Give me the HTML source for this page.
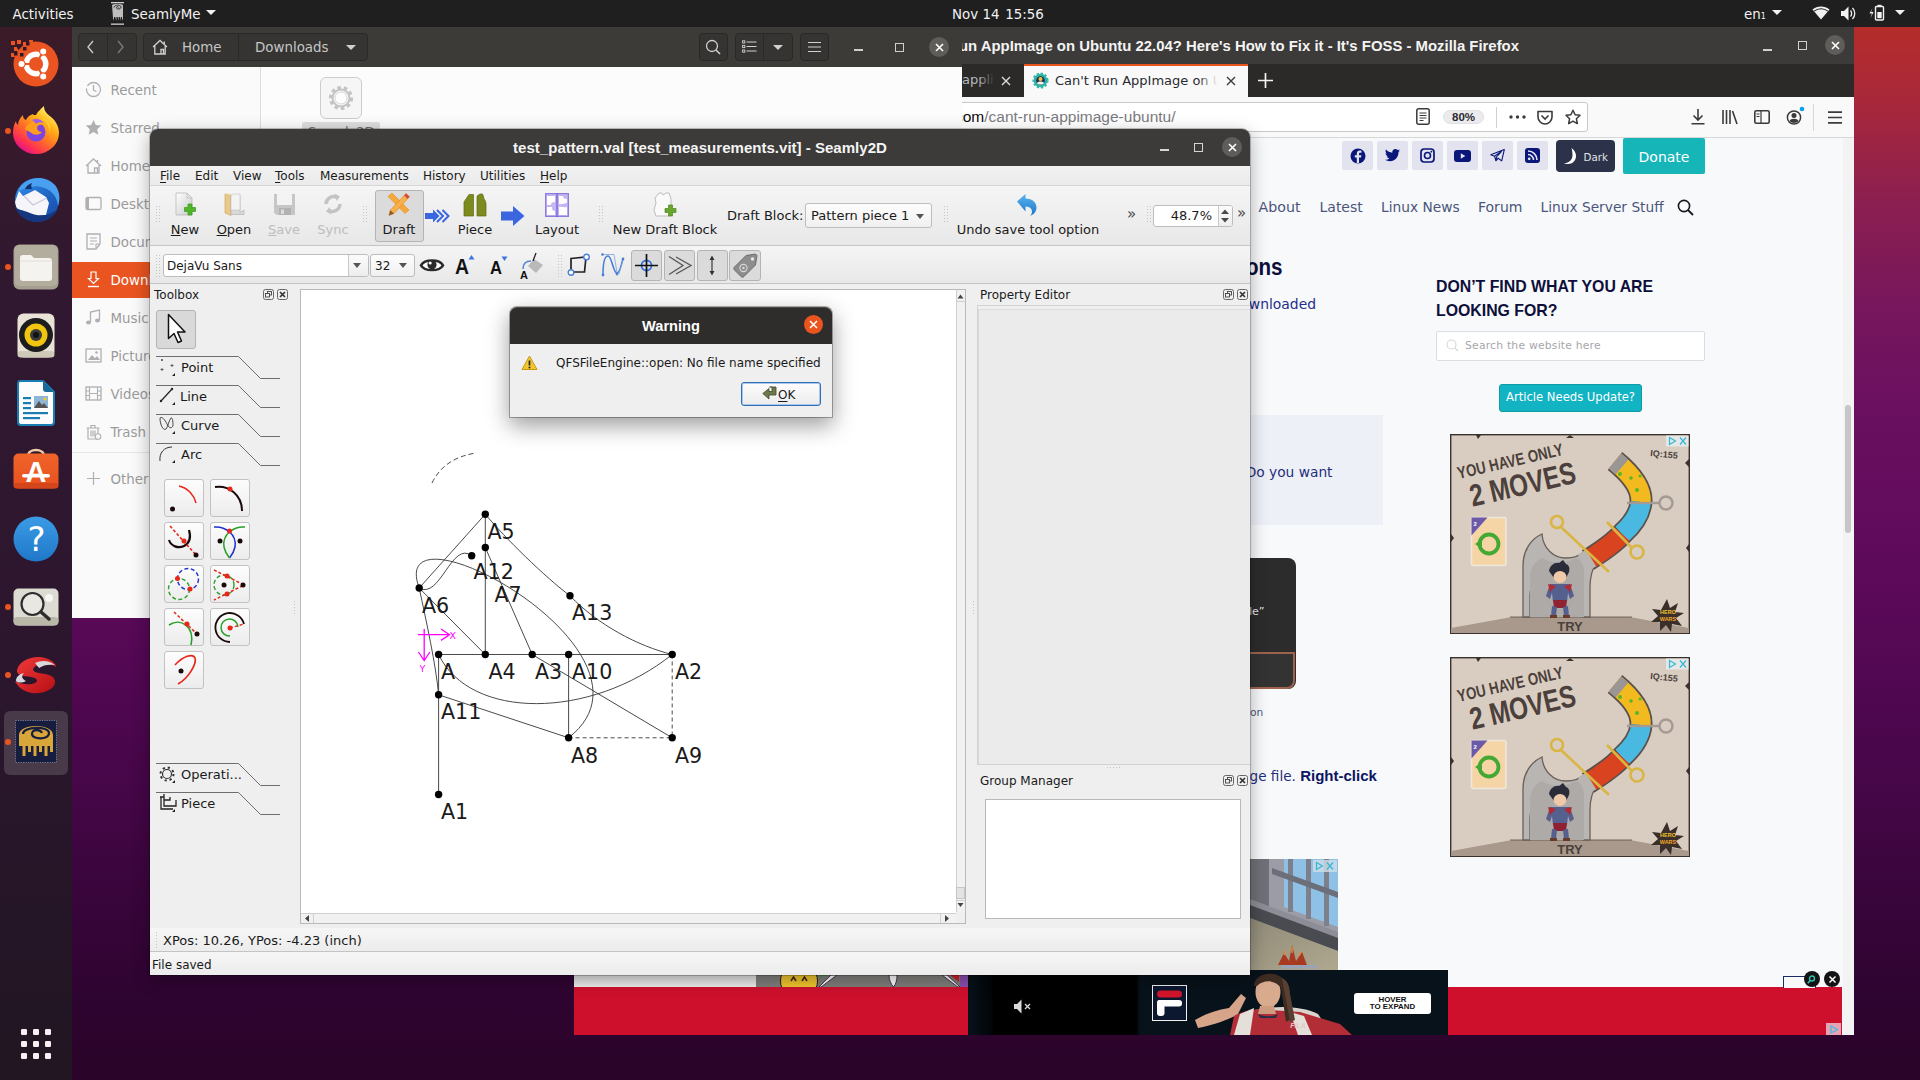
<!DOCTYPE html>
<html lang="en">
<head>
<meta charset="utf-8">
<title>Desktop</title>
<style>
*{box-sizing:border-box;margin:0;padding:0}
html,body{width:1920px;height:1080px;overflow:hidden;background:#2c0528}
body{position:relative;font-family:"DejaVu Sans","Liberation Sans",sans-serif;font-size:13px;color:#222}
.abs{position:absolute}
.ub{font-family:"Liberation Sans","DejaVu Sans",sans-serif}
#desk{left:0;top:0;width:1920px;height:1080px;background:linear-gradient(180deg,#b52d2b 27px,#a8283a 100px,#8c1f50 200px,#78175c 300px,#6b1060 400px,#640c5e 500px,#5a0958 600px,#4f0750 700px,#440646 800px,#38053a 900px,#2e0430 1000px,#2a0428 1080px)}
/* top bar */
#topbar{left:0;top:0;width:1920px;height:27px;background:#1f1f1f;color:#f2f2f2;font-size:14.5px}
#topbar span{position:absolute;top:4px;white-space:nowrap}
/* dock */
#dock{left:0;top:27px;width:72px;height:1053px;background:linear-gradient(180deg,#3b1b28 0%,#301830 25%,#2c162e 60%,#251627 85%,#221622 100%)}
.dot{position:absolute;left:5px;width:6px;height:6px;border-radius:3px;background:#e95420}
/* windows */
#files{left:72px;top:27px;width:890px;height:591px;background:#fcfcfc}
#files .hdr{left:0;top:0;width:890px;height:40px;background:#3c3b38}

#seam{left:150px;top:129px;width:1100px;height:846px;background:#efefef;border-radius:8px 8px 0 0;box-shadow:0 5px 18px rgba(0,0,0,.32),0 0 0 1px rgba(0,0,0,.22)}

/* seamly */
#seamc{left:0;top:0;width:1920px;height:1080px;font-size:12px;color:#1a1a1a}
#seamc div, #seamc span{position:absolute;white-space:nowrap}
.stitle{left:150px;top:129px;width:1100px;height:37px;background:#3c3b39;border-radius:8px 8px 0 0}
.stitle .t{left:0;width:1100px;top:10px;text-align:center;color:#f4f4f4;font-weight:bold;font-size:15.05px}
.menubar{left:150px;top:166px;width:1100px;height:19px;background:linear-gradient(#f1f1f1,#ebebeb)}
.menubar span{top:3px;font-size:12px}
.menubar u{text-decoration:underline;text-underline-offset:2px}
.tb1{left:150px;top:185px;width:1100px;height:61px;background:linear-gradient(#f5f5f5,#e8e8e8);border-top:1px solid #d6d6d6;border-bottom:1px solid #c4c4c4}
.tb2{left:150px;top:246px;width:1100px;height:38px;background:linear-gradient(#f5f5f5,#e8e8e8);border-bottom:1px solid #c4c4c4}
.tl{font-size:13px;top:222px;text-align:center}
.tl.dis{color:#bdbdbd}
.grip{width:5px;background-image:radial-gradient(circle,#c4c4c4 0.7px,transparent 0.9px);background-size:3px 3px}

.btnp{background:#dbdbdb;border:1px solid #b4b4b4;border-radius:3px}
.combo{background:linear-gradient(#fdfdfd,#f0f0f0);border:1px solid #bdbdbd;border-radius:3px}
.field{background:#fff;border:1px solid #bdbdbd;border-radius:3px}
#seamc svg{position:absolute;overflow:visible}
.da{width:0;height:0;border-left:4px solid transparent;border-right:4px solid transparent;border-top:5px solid #555}

.dockt{font-size:12px}
.dbtn{width:11px;height:11px;border:1px solid #555;border-radius:2px}
.toolb{width:40px;height:38px;background:linear-gradient(#fdfdfd,#ececec);border:1px solid #c2c2c2;border-radius:3px}
.tabl{font-size:13px}
.gl{font-size:20.6px;fill:#1a1a1a;font-family:"DejaVu Sans",sans-serif}

#topbar{font-family:"DejaVu Sans","Liberation Sans",sans-serif;font-size:13.4px}
#topbar svg,#dock svg{position:absolute;overflow:visible}
.wda{position:absolute;width:0;height:0;border-left:5px solid transparent;border-right:5px solid transparent;border-top:5.500px solid #f2f2f2}

#filesc{left:0;top:0;width:1920px;height:1080px;font-size:13.4px}
#filesc div,#filesc span,#filesc svg{position:absolute;white-space:nowrap}
#filesc svg{overflow:visible}
.hb{background:#353432;border:1px solid #2a2927;border-radius:4px}
.sbi{left:110.500px;color:#a0a0a0;margin-top:1px}

#ffx{left:574px;top:27px;width:1280px;height:1008px;background:#f8f9fb;overflow:hidden}
#ffxc{left:-574px;top:-27px;width:1920px;height:1080px;font-size:13.4px}
#ffxc div,#ffxc span,#ffxc svg{position:absolute;white-space:nowrap}
#ffxc svg{overflow:visible}
.soc{width:31px;height:29px;top:141px;background:#e2e3ef;border-radius:2px}
.nl{top:199px;font-size:14.200px;color:#4b557b}
</style>
</head>
<body>
<div id="desk" class="abs"></div>

<!-- FIREFOX WINDOW -->
<div id="ffx" class="abs">
<div id="ffxc" class="abs">
<div style="left:574px;top:27px;width:1280px;height:37px;background:#3c3b39"></div>
<div class="ub" style="left:574px;top:38px;width:945px;text-align:right;color:#f4f4f4;font-weight:bold;font-size:14.900px">Can't Run AppImage on Ubuntu 22.04? Here's How to Fix it - It's FOSS - Mozilla Firefox</div>
<div style="left:1763px;top:49px;width:9px;height:1.500px;background:#cfcfcf"></div>
<div style="left:1797.500px;top:41px;width:9px;height:9px;border:1.300px solid #cfcfcf"></div>
<div style="left:1825px;top:35px;width:20px;height:20px;border-radius:10px;background:#5e5d5a"></div>
<svg style="left:1830.500px;top:40.500px" width="9" height="9" viewBox="0 0 9 9"><path d="M1 1l7 7M8 1L1 8" stroke="#fff" stroke-width="1.600"/></svg>
<!-- tab bar -->
<div style="left:574px;top:64px;width:1280px;height:33px;background:#2b2a29"></div>
<div style="left:1024px;top:64px;width:224px;height:33px;background:#f9f9fa;border-top:2px solid #e8541e"></div>
<div style="left:762px;top:72px;width:200px;text-align:right;font-size:13px;color:#b9b9b9">ubuntu 22.04 cant run&nbsp;</div><div style="left:962px;top:72px;width:32px;overflow:hidden;font-size:13px;color:#b9b9b9">application - Google Search</div><div style="left:978px;top:68px;width:17px;height:26px;background:linear-gradient(90deg,rgba(43,42,41,0),#2b2a29)"></div>
<svg style="left:1001px;top:76px" width="10" height="10" viewBox="0 0 10 10"><path d="M1 1l8 8M9 1L1 9" stroke="#dcdcdc" stroke-width="1.400"/></svg>
<svg style="left:1032px;top:72px" width="17" height="17" viewBox="0 0 17 17"><circle cx="8.500" cy="8.500" r="6.800" fill="#2db5a6" stroke="#2db5a6" stroke-width="2.500" stroke-dasharray="2.200 1.800"/><circle cx="8.500" cy="8.500" r="4.300" fill="#23305e"/><circle cx="8.500" cy="7" r="2" fill="#f3c23a"/><path d="M5 11c1-2 6-2 7 0-1 2-6 2-7 0z" fill="#f7f2e2"/></svg>
<div style="left:1055px;top:73px;width:162px;height:18px;overflow:hidden;font-size:13px;color:#2a2a2e">Can't Run AppImage on Ubuntu</div>
<div style="left:1198px;top:68px;width:22px;height:26px;background:linear-gradient(90deg,rgba(249,249,250,0),#f9f9fa 90%)"></div>
<svg style="left:1226px;top:76px" width="10" height="10" viewBox="0 0 10 10"><path d="M1 1l8 8M9 1L1 9" stroke="#3d3d3f" stroke-width="1.400"/></svg>
<svg style="left:1258px;top:73px" width="15" height="15" viewBox="0 0 15 15"><path d="M7.500 0v15M0 7.500h15" stroke="#f4f4f4" stroke-width="1.700"/></svg>
<!-- nav bar -->
<div style="left:574px;top:97px;width:1280px;height:41px;background:#f9f9fa;border-bottom:1px solid #d7d7db"></div>
<div style="left:700px;top:102px;width:888px;height:30px;background:#fff;border:1px solid #c9c9cd;border-radius:3px"></div>
<div class="ub" style="left:700px;width:475.500px;text-align:right;top:108px;font-size:15.500px;color:#7a7a7e"><span style="position:static;color:#8a8a8e">itsfoss.</span><span style="position:static;color:#0c0c0d">com</span>/cant-run-appimage-ubuntu/</div>
<svg style="left:1416px;top:108px" width="14" height="17" viewBox="0 0 14 17"><rect x=".8" y=".8" width="12.400" height="15.400" rx="2" fill="none" stroke="#3b3b3d" stroke-width="1.500"/><path d="M3.500 5h7M3.500 7.500h7M3.500 10h7M3.500 12.500h4" stroke="#3b3b3d" stroke-width="1"/></svg>
<div style="left:1443px;top:110px;width:41px;height:14px;border-radius:7px;background:#ebebee;border:1px solid #e0e0e4"></div>
<div class="ub" style="left:1443px;top:110px;width:41px;text-align:center;font-size:11.500px;font-weight:bold;color:#2a2a2e;line-height:14px">80%</div>
<div style="left:1496px;top:107px;width:1px;height:21px;background:#d0d0d4"></div>
<svg style="left:1509px;top:115px" width="17" height="4" viewBox="0 0 17 4"><circle cx="2" cy="2" r="1.700" fill="#3b3b3d"/><circle cx="8.500" cy="2" r="1.700" fill="#3b3b3d"/><circle cx="15" cy="2" r="1.700" fill="#3b3b3d"/></svg>
<svg style="left:1537px;top:110px" width="16" height="15" viewBox="0 0 16 15"><path d="M1 1.500h14v5.500c0 4-3.500 7-7 7s-7-3-7-7z" fill="none" stroke="#3b3b3d" stroke-width="1.600" stroke-linejoin="round"/><path d="M4.500 5.500L8 9l3.500-3.500" fill="none" stroke="#3b3b3d" stroke-width="1.600"/></svg>
<svg style="left:1565px;top:109px" width="16" height="16" viewBox="0 0 16 16"><path d="M8 1.200l2.100 4.500 4.900.6-3.600 3.400.9 4.900L8 12.200l-4.300 2.400.9-4.900L1 6.300l4.900-.6z" fill="none" stroke="#3b3b3d" stroke-width="1.500" stroke-linejoin="round"/></svg>
<svg style="left:1691px;top:109px" width="14" height="16" viewBox="0 0 14 16"><path d="M7 0v11M2.500 6.500L7 11l4.500-4.500M.5 14.800h13" fill="none" stroke="#3b3b3d" stroke-width="1.600"/></svg>
<svg style="left:1722px;top:110px" width="16" height="14" viewBox="0 0 16 14"><path d="M1 0v14M4.500 0v14M8 0v14M10.500 1l4.500 13" fill="none" stroke="#3b3b3d" stroke-width="1.600"/></svg>
<svg style="left:1754px;top:110px" width="16" height="14" viewBox="0 0 16 14"><rect x=".8" y=".8" width="14.400" height="12.400" rx="1.500" fill="none" stroke="#3b3b3d" stroke-width="1.600"/><path d="M7 1v12M2.500 4h3M2.500 6.500h3" stroke="#3b3b3d" stroke-width="1.200"/></svg>
<svg style="left:1786px;top:106px" width="20" height="20" viewBox="0 0 20 20"><circle cx="8" cy="11.500" r="6.600" fill="none" stroke="#3b3b3d" stroke-width="1.500"/><circle cx="8" cy="9.500" r="2.500" fill="#3b3b3d"/><path d="M3.500 15c1-3 8-3 9 0-2 2.500-7 2.500-9 0z" fill="#3b3b3d"/><circle cx="16" cy="3" r="2.300" fill="#0a9fe8"/></svg>
<div style="left:1813px;top:104px;width:1px;height:27px;background:#d7d7db"></div>
<svg style="left:1828px;top:111px" width="14" height="13" viewBox="0 0 14 13"><path d="M0 1.200h14M0 6.500h14M0 11.800h14" stroke="#3b3b3d" stroke-width="1.700"/></svg>
<!-- page -->
<div class="soc" style="left:1342px"></div><div class="soc" style="left:1377px"></div><div class="soc" style="left:1412px"></div><div class="soc" style="left:1447px"></div><div class="soc" style="left:1482px"></div><div class="soc" style="left:1517px"></div>
<svg style="left:1350px;top:148px" width="16" height="16" viewBox="0 0 16 16"><circle cx="8" cy="8" r="7.500" fill="#0a1678"/><path d="M9 15V9.500h2l.4-2.300H9V6c0-.8.400-1.300 1.300-1.300h1.200V2.700c-.5-.1-1.100-.2-1.800-.2C8 2.500 6.800 3.600 6.800 5.600v1.600h-2v2.300h2V15z" fill="#e2e3ef"/></svg>
<svg style="left:1385px;top:149px" width="15" height="13" viewBox="0 0 15 13"><path d="M15 1.500c-.6.300-1.200.4-1.800.5.600-.4 1.100-1 1.400-1.700-.6.400-1.300.6-2 .8C12 .4 11.200 0 10.300 0 8.600 0 7.300 1.400 7.300 3c0 .3 0 .5.100.7C4.800 3.600 2.500 2.400 1 .6c-.3.500-.4 1-.4 1.600 0 1 .500 2 1.400 2.500-.5 0-1-.1-1.400-.4 0 1.500 1.100 2.700 2.500 3-.5.100-.9.100-1.400 0 .4 1.200 1.500 2.100 2.900 2.100C3.500 10.300 2.100 10.800.700 10.800H0C1.400 11.700 3 12.200 4.700 12.200c5.700 0 8.800-4.700 8.800-8.800v-.4c.6-.4 1.100-.9 1.500-1.500z" fill="#0a1678"/></svg>
<svg style="left:1420px;top:148px" width="15" height="15" viewBox="0 0 15 15"><rect x="1" y="1" width="13" height="13" rx="3.200" fill="none" stroke="#0a1678" stroke-width="1.700"/><circle cx="7.500" cy="7.500" r="3" fill="none" stroke="#0a1678" stroke-width="1.600"/><circle cx="11.300" cy="3.700" r=".9" fill="#0a1678"/></svg>
<svg style="left:1454px;top:150px" width="17" height="12" viewBox="0 0 17 12"><rect width="17" height="12" rx="3" fill="#0a1678"/><path d="M6.800 3.300L11.300 6 6.800 8.700z" fill="#e2e3ef"/></svg>
<svg style="left:1490px;top:149px" width="15" height="13" viewBox="0 0 15 13"><path d="M14.300.6L.8 5.800l3.700 1.400 1.400 4.600 2.200-2.600 3.600 2.700zM4.500 7.200l7-4.700-5 5.500-.6 3.800" fill="none" stroke="#0a1678" stroke-width="1.100" stroke-linejoin="round"/></svg>
<svg style="left:1525px;top:148px" width="15" height="15" viewBox="0 0 15 15"><rect width="15" height="15" rx="3" fill="#0a1678"/><circle cx="4.200" cy="10.800" r="1.400" fill="#e2e3ef"/><path d="M3 6.500c3 0 5.500 2.500 5.500 5.500M3 3c5 0 9 4 9 9" fill="none" stroke="#e2e3ef" stroke-width="1.600"/></svg>
<div style="left:1556px;top:140px;width:59px;height:32px;border-radius:4px;background:#2b3249"></div>
<svg style="left:1564px;top:148px" width="15" height="16" viewBox="0 0 15 16"><path d="M7.500 0c3 2 4.500 5 4.500 8 0 4.500-3.500 8-8 8-1.500 0-3-.4-4-1 4 .5 8.500-2.500 8.500-8 0-2.500-.5-5-1-7z" fill="#fff"/></svg>
<div style="left:1583.500px;top:150.500px;font-size:10.300px;color:#e0e1e8">Dark</div>
<div style="left:1623px;top:138px;width:82px;height:36px;border-radius:2px;background:#15b5b8"></div>
<div style="left:1623px;top:148.500px;width:82px;text-align:center;font-size:14px;color:#fff">Donate</div>
<div class="nl" style="left:1258.500px">About</div><div class="nl" style="left:1319.500px;font-size:14px">Latest</div><div class="nl" style="left:1381px;font-size:13.750px">Linux News</div><div class="nl" style="left:1478px;font-size:14px">Forum</div><div class="nl" style="left:1540.500px;font-size:13.750px">Linux Server Stuff</div>
<svg style="left:1677px;top:199px" width="17" height="17" viewBox="0 0 17 17"><circle cx="7" cy="7" r="5.600" fill="none" stroke="#17171f" stroke-width="1.600"/><path d="M11 11l5 5" stroke="#17171f" stroke-width="1.800"/></svg>

<div style="left:1150px;width:132.500px;text-align:right;top:255.500px;font-weight:bold;font-size:20.600px;color:#0d0f3a;transform:scaleY(1.14);transform-origin:50% 78%" class="ub">Instructions</div>
<div style="left:1150px;width:166px;text-align:right;top:296px;font-size:13.900px;color:#1f2f8a">downloaded</div>
<div style="left:1150px;top:415px;width:233px;height:110px;background:#eef0f8"></div>
<div style="left:1150px;width:182.500px;text-align:right;top:463.500px;font-size:13.760px;color:#1f2f7a">Do you want</div>
<div style="left:1100px;top:558px;width:196px;height:131px;border-radius:8px;background:#2c2c2c"></div>
<div style="left:1100px;top:652px;width:195px;height:37px;border-radius:0 0 8px 8px;background:#333;border:2px solid #9f624d"></div>
<div style="left:1249px;top:604.500px;font-size:11px;color:#e6e6e6">le”</div>
<div style="left:1250px;top:706px;font-size:10.700px;color:#4b557b">on</div>
<div style="left:1249.500px;top:766.500px;font-size:13.600px;color:#1f2f7a">ge file. <span class="ub" style="position:static;font-weight:bold;font-size:15px;color:#0b1560">Right-click</span></div>
<!-- prison ad -->
<svg style="left:1150px;top:859px" width="188" height="112" viewBox="0 0 188 112"><defs><linearGradient id="flg" x1="0" y1="0" x2="1" y2="1"><stop offset="0" stop-color="#8f8a78"/><stop offset="1" stop-color="#b0a990"/></linearGradient></defs><rect width="188" height="112" fill="#707178"/><path d="M119 0h69v74L119 48z" fill="#9b9ca6"/><path d="M134 0h54v68l-54-20z" fill="#8fc1e7"/><g fill="#7d7f8b"><rect x="138" y="0" width="5" height="53"/><rect x="156" y="0" width="5" height="60"/><rect x="174" y="0" width="5" height="67"/></g><path d="M122 9l66 24v6L122 15z" fill="#6c6e79"/><path d="M100 40l88 33v8L100 48z" fill="#8c8d96"/><path d="M100 46l88 33v13L100 59z" fill="#4a4b51"/><path d="M100 59l88 33v20H100z" fill="url(#flg)"/><path d="M128 106l6-12 5 8 3-16 4 16 6-9 5 13z" fill="#a83a22"/><path d="M134 96l2-4M151 93l-2 4M142 88v6" stroke="#e8863a" stroke-width="1.500"/><rect x="131" y="106" width="36" height="3.500" fill="#9aa3b5"/><rect x="163" y="1" width="24" height="12" fill="#cfdde6" fill-opacity=".8"/><path d="M166.500 3.500l6 3.500-6 3.500z" fill="none" stroke="#35b7d6" stroke-width="1.200"/><path d="M177 3.500l6 7M183 3.500l-6 7" stroke="#35b7d6" stroke-width="1.200"/></svg>
<!-- sidebar -->
<div class="ub" style="left:1436px;top:275px;font-weight:bold;font-size:15.850px;color:#0d0f3a;line-height:23.800px;white-space:normal;width:260px">DON’T FIND WHAT YOU ARE<br>LOOKING FOR?</div>
<div style="left:1436px;top:331px;width:269px;height:30px;background:#fff;border:1px solid #dcdde2;border-radius:2px"></div>
<svg style="left:1446px;top:339px" width="13" height="13" viewBox="0 0 13 13"><circle cx="5.500" cy="5.500" r="4.500" fill="none" stroke="#d5d5d8" stroke-width="1.100"/><path d="M9 9l3 3" stroke="#d5d5d8" stroke-width="1.200"/></svg>
<div style="left:1465px;top:339px;font-size:10.800px;color:#a6a6ab;letter-spacing:.2px">Search the website here</div>
<div style="left:1499px;top:384px;width:143px;height:28px;border-radius:3px;background:#12b3c2;border:1px solid #0f9aa8"></div>
<div style="left:1499px;top:390px;width:143px;text-align:center;font-size:11.600px;color:#fff">Article Needs Update?</div>
<svg style="left:1450px;top:434px" width="240" height="200" viewBox="0 0 240 200">
<rect x=".7" y=".7" width="238.600" height="198.600" fill="#d9cdc1" stroke="#3b322e" stroke-width="1.400"/>
<path d="M1 194L62 183H180L239 194V199H1z" fill="#a8998c"/><path d="M60 183h122" stroke="#5b4f48" stroke-width=".8"/>
<path d="M73 183V132c0-16 8-27 19-32 1 14 11 24 24 24 8 0 14-2 19-7l12 10c-5 8-7 16-7 26v30h-7v-28c0-8-4-12-9-14-10 4-22 4-31-1-8 4-13 10-13 22v21z" fill="#b9b5b3" stroke="#6b605a" stroke-width="1.300"/>
<path d="M80 183v-40c0-9 5-16 12-19 9 6 24 6 34 0 5 2 8 7 8 15v44z" fill="#aeaaa8"/>
<g fill="none" stroke-linecap="butt"><path d="M165 27C181 40 192 54 191 68C190 80 182 91 172 100C165 108 154 116 138 126" stroke="#5b514b" stroke-width="23"/><path d="M165 27C181 40 192 54 191 68" stroke="#f2ba1f" stroke-width="19.500"/><path d="M165 27l7 6" stroke="#9a9695" stroke-width="19.500"/><path d="M191 68C190 80 182 91 172 100" stroke="#4ab9e2" stroke-width="19.500"/><path d="M172 100C165 108 154 116 140 125" stroke="#d9431f" stroke-width="19.500"/><path d="M141 124l-8 5" stroke="#b9b5b3" stroke-width="19.500"/></g>
<circle cx="170" cy="40" r="2" fill="#58b52a"/><circle cx="181" cy="44" r="1.800" fill="#58b52a"/><circle cx="187" cy="56" r="2" fill="#58b52a"/><circle cx="190" cy="42" r="1.500" fill="#58b52a"/>
<g fill="none" stroke="#d9b544" stroke-width="2.600"><circle cx="107" cy="88" r="6"/><circle cx="187" cy="118" r="6.500"/><path d="M111 93l48 45M182 114l-25-26"/></g>
<g fill="none" stroke="#a39a94" stroke-width="2.400"><circle cx="216" cy="69" r="6.500"/><path d="M209 69h-32"/></g>
<rect x="21.500" y="83.500" width="34.500" height="48" rx="2" fill="#f5d4a6" stroke="#efe7dd" stroke-width="1.600"/><path d="M21.500 83.500h16l-16 18z" fill="#6b5aa8"/><circle cx="39" cy="110" r="9.500" fill="none" stroke="#44a832" stroke-width="3.800"/><path d="M25 110l7-5v10z" fill="#44a832"/>
<text x="23.500" y="92" font-size="6" font-weight="bold" fill="#fff" font-family="Liberation Sans, sans-serif">2</text>
<g transform="translate(1 -9) rotate(-13 60 40)" fill="#4b403b" font-family="Liberation Sans, sans-serif" font-weight="bold"><text x="6" y="42" font-size="17" textLength="108" lengthAdjust="spacingAndGlyphs">YOU HAVE ONLY</text><text x="13" y="72" font-size="31" textLength="108" lengthAdjust="spacingAndGlyphs">2 MOVES</text></g>
<text x="200" y="22" font-size="9" font-weight="bold" fill="#4b403b" font-family="Liberation Sans, sans-serif" transform="rotate(6 200 22)">IQ:155</text>
<g><path d="M99 137c1-6 6-9 10-8l4-3 3 4c3 1 4 4 3 8l-3 6h-12z" fill="#2b2c3a"/><ellipse cx="110" cy="143" rx="6.500" ry="6" fill="#f0c9a8"/><path d="M100 150h20l4 12-4 3-2-6-1 9h-14l-1-9-2 6-4-3z" fill="#56608f"/><path d="M98 150l8 2-6 6zM122 150l-8 2 6 6z" fill="#b22a34"/><path d="M103 166h14l-1 8h-12z" fill="#8f2230"/><path d="M102 172l5 1-1 9h-5zM113 173l5-1 1 10h-5z" fill="#56608f"/><path d="M100 181h7v3h-7zM113 181h7v3h-7z" fill="#6b3b2a"/></g>
<text x="120" y="196.500" font-size="13" font-weight="bold" text-anchor="middle" fill="#4b403b" font-family="Liberation Sans, sans-serif">TRY</text>
<path d="M217 165l3 9 8-5-3 9 9 1-8 5 6 8-10-2-1 8-5-7-6 6 0-9-9 0 7-6-6-7 9 1z" fill="#3a2f2b"/><text x="218" y="180" font-size="5.500" font-weight="bold" text-anchor="middle" fill="#f2c32a" font-family="Liberation Sans, sans-serif">HERO</text><text x="218" y="186.500" font-size="5.500" font-weight="bold" text-anchor="middle" fill="#f2a82a" font-family="Liberation Sans, sans-serif">WARS</text>
<rect x="216" y="1.500" width="22.500" height="11" fill="#e9eef0" fill-opacity=".8"/><path d="M219.500 3.500l6 3.500-6 3.500z" fill="none" stroke="#35b7d6" stroke-width="1.200"/><path d="M230 3.500l6 7M236 3.500l-6 7" stroke="#35b7d6" stroke-width="1.200"/>
<path d="M1 100l3 4-3 4zM239 25l-4 4 4 4zM120 1l-4 3 8 0zM239 110l-3 4 3 4zM26 1l2 4 3-4z" fill="#3b322e"/>
</svg><svg style="left:1450px;top:657px" width="240" height="200" viewBox="0 0 240 200">
<rect x=".7" y=".7" width="238.600" height="198.600" fill="#d9cdc1" stroke="#3b322e" stroke-width="1.400"/>
<path d="M1 194L62 183H180L239 194V199H1z" fill="#a8998c"/><path d="M60 183h122" stroke="#5b4f48" stroke-width=".8"/>
<path d="M73 183V132c0-16 8-27 19-32 1 14 11 24 24 24 8 0 14-2 19-7l12 10c-5 8-7 16-7 26v30h-7v-28c0-8-4-12-9-14-10 4-22 4-31-1-8 4-13 10-13 22v21z" fill="#b9b5b3" stroke="#6b605a" stroke-width="1.300"/>
<path d="M80 183v-40c0-9 5-16 12-19 9 6 24 6 34 0 5 2 8 7 8 15v44z" fill="#aeaaa8"/>
<g fill="none" stroke-linecap="butt"><path d="M165 27C181 40 192 54 191 68C190 80 182 91 172 100C165 108 154 116 138 126" stroke="#5b514b" stroke-width="23"/><path d="M165 27C181 40 192 54 191 68" stroke="#f2ba1f" stroke-width="19.500"/><path d="M165 27l7 6" stroke="#9a9695" stroke-width="19.500"/><path d="M191 68C190 80 182 91 172 100" stroke="#4ab9e2" stroke-width="19.500"/><path d="M172 100C165 108 154 116 140 125" stroke="#d9431f" stroke-width="19.500"/><path d="M141 124l-8 5" stroke="#b9b5b3" stroke-width="19.500"/></g>
<circle cx="170" cy="40" r="2" fill="#58b52a"/><circle cx="181" cy="44" r="1.800" fill="#58b52a"/><circle cx="187" cy="56" r="2" fill="#58b52a"/><circle cx="190" cy="42" r="1.500" fill="#58b52a"/>
<g fill="none" stroke="#d9b544" stroke-width="2.600"><circle cx="107" cy="88" r="6"/><circle cx="187" cy="118" r="6.500"/><path d="M111 93l48 45M182 114l-25-26"/></g>
<g fill="none" stroke="#a39a94" stroke-width="2.400"><circle cx="216" cy="69" r="6.500"/><path d="M209 69h-32"/></g>
<rect x="21.500" y="83.500" width="34.500" height="48" rx="2" fill="#f5d4a6" stroke="#efe7dd" stroke-width="1.600"/><path d="M21.500 83.500h16l-16 18z" fill="#6b5aa8"/><circle cx="39" cy="110" r="9.500" fill="none" stroke="#44a832" stroke-width="3.800"/><path d="M25 110l7-5v10z" fill="#44a832"/>
<text x="23.500" y="92" font-size="6" font-weight="bold" fill="#fff" font-family="Liberation Sans, sans-serif">2</text>
<g transform="translate(1 -9) rotate(-13 60 40)" fill="#4b403b" font-family="Liberation Sans, sans-serif" font-weight="bold"><text x="6" y="42" font-size="17" textLength="108" lengthAdjust="spacingAndGlyphs">YOU HAVE ONLY</text><text x="13" y="72" font-size="31" textLength="108" lengthAdjust="spacingAndGlyphs">2 MOVES</text></g>
<text x="200" y="22" font-size="9" font-weight="bold" fill="#4b403b" font-family="Liberation Sans, sans-serif" transform="rotate(6 200 22)">IQ:155</text>
<g><path d="M99 137c1-6 6-9 10-8l4-3 3 4c3 1 4 4 3 8l-3 6h-12z" fill="#2b2c3a"/><ellipse cx="110" cy="143" rx="6.500" ry="6" fill="#f0c9a8"/><path d="M100 150h20l4 12-4 3-2-6-1 9h-14l-1-9-2 6-4-3z" fill="#56608f"/><path d="M98 150l8 2-6 6zM122 150l-8 2 6 6z" fill="#b22a34"/><path d="M103 166h14l-1 8h-12z" fill="#8f2230"/><path d="M102 172l5 1-1 9h-5zM113 173l5-1 1 10h-5z" fill="#56608f"/><path d="M100 181h7v3h-7zM113 181h7v3h-7z" fill="#6b3b2a"/></g>
<text x="120" y="196.500" font-size="13" font-weight="bold" text-anchor="middle" fill="#4b403b" font-family="Liberation Sans, sans-serif">TRY</text>
<path d="M217 165l3 9 8-5-3 9 9 1-8 5 6 8-10-2-1 8-5-7-6 6 0-9-9 0 7-6-6-7 9 1z" fill="#3a2f2b"/><text x="218" y="180" font-size="5.500" font-weight="bold" text-anchor="middle" fill="#f2c32a" font-family="Liberation Sans, sans-serif">HERO</text><text x="218" y="186.500" font-size="5.500" font-weight="bold" text-anchor="middle" fill="#f2a82a" font-family="Liberation Sans, sans-serif">WARS</text>
<rect x="216" y="1.500" width="22.500" height="11" fill="#e9eef0" fill-opacity=".8"/><path d="M219.500 3.500l6 3.500-6 3.500z" fill="none" stroke="#35b7d6" stroke-width="1.200"/><path d="M230 3.500l6 7M236 3.500l-6 7" stroke="#35b7d6" stroke-width="1.200"/>
<path d="M1 100l3 4-3 4zM239 25l-4 4 4 4zM120 1l-4 3 8 0zM239 110l-3 4 3 4zM26 1l2 4 3-4z" fill="#3b322e"/>
</svg>
<div style="left:1843px;top:138px;width:11px;height:897px;background:#f3f3f4"></div>
<div style="left:1845px;top:405px;width:6px;height:128px;border-radius:3px;background:#c6c6c8"></div>
<!-- bottom -->
<div style="left:574px;top:970px;width:182px;height:17px;background:linear-gradient(#dcdcdc,#f0f0f0)"></div>
<div style="left:756px;top:960px;width:204px;height:27px;background:#807f7c"></div>
<div style="left:960px;top:960px;width:8px;height:27px;background:#8a4fb0"></div>
<div style="left:780px;top:962px;width:38px;height:38px;border-radius:19px;background:#f1c72e;border:1.500px solid #2a1a2a"></div>
<svg style="left:790px;top:976px" width="20" height="6" viewBox="0 0 20 6"><path d="M1 5l2.500-4L6 5M12 5l2.500-4L17 5" fill="none" stroke="#4a2c10" stroke-width="1.600"/></svg>
<svg style="left:819px;top:975px" width="150" height="12" viewBox="0 0 150 12"><path d="M0 12L12 0h6L2 12z" fill="#fff" stroke="#2a1a3a" stroke-width=".8"/><path d="M0 3l6-3H1z" fill="#3f9a3a"/><path d="M70 0c0 5 2 9 4.500 12C77 9 78 5 78 0z" fill="#fff" stroke="#2a1a3a" stroke-width=".8"/><path d="M123 0l16 12h2L128 0z" fill="#fff" stroke="#2a1a3a" stroke-width=".8"/><path d="M131 0l9 7V0z" fill="#d0202a"/></svg>
<div style="left:574px;top:987px;width:1268px;height:48px;background:#cf102d"></div>
<div style="left:968px;top:970px;width:480px;height:65px;background:linear-gradient(90deg,#08121a 0,#02060a 22px,#000 26px,#000 168px,#08121a 172px,#08121a 100%)"></div>
<svg style="left:1014px;top:999px" width="18" height="15" viewBox="0 0 18 15"><path d="M0 5h3l4.500-4.500v14L3 10H0z" fill="#d8d8d8"/><path d="M11 5l5 5M16 5l-5 5" stroke="#d8d8d8" stroke-width="1.300"/></svg>
<div style="left:1152px;top:985px;width:35px;height:36px;border:1.500px solid #f2f2f2;background:#0b1830"></div>
<svg style="left:1156px;top:989px" width="27" height="28" viewBox="0 0 27 28"><rect x="1" y="1.500" width="25" height="7" rx="3.500" fill="#d2142c"/><rect x="1" y="11" width="25" height="6.500" rx="3" fill="#fff"/><rect x="1" y="11" width="7.500" height="16" rx="3" fill="#fff"/></svg>
<svg style="left:1190px;top:970px" width="165" height="65" viewBox="0 0 165 65"><path d="M58 42c20-6 50-8 70 2l14 21H50z" fill="#d9d3cd"/><path d="M5 50c10-6 22-10 34-12l12-14 5 4-8 16c-6 4-20 10-40 14z" fill="#d6a488"/><path d="M44 46c10-6 24-8 36-6l30 2 40 12 12 11H40z" fill="#b32d36"/><path d="M100 42l14 4 8 19H108z" fill="#e4dfd9"/><path d="M50 44l14-6-4 27H44z" fill="#e4dfd9"/><ellipse cx="78" cy="22" rx="12.500" ry="16" fill="#d8ab8f"/><path d="M64 16C64 1 92-1 96 14l7 34-7 4-5-34c-5-8-17-9-24-2z" fill="#3e2b22"/><path d="M92 8c5 2 8 8 8 16l5 26-5 2z" fill="#5a4032"/><path d="M70 36h14l2 8H68z" fill="#cf9b7e"/><path d="M68 44c6 3 14 3 20 0l-2 4H70z" fill="#2a2d4a"/><text x="108" y="58" font-size="7" font-weight="bold" fill="#e2c9c9" text-anchor="middle" font-family="Liberation Sans, sans-serif" font-style="italic">FILA</text></svg>
<div style="left:1354px;top:993px;width:77px;height:21px;border-radius:3px;background:#fff"></div>
<div class="ub" style="left:1354px;top:995.500px;width:77px;text-align:center;font-size:7.900px;font-weight:bold;color:#111;line-height:7.800px;white-space:normal">HOVER<br>TO EXPAND</div>
<div style="left:1783px;top:976px;width:33px;height:12px;border:1px solid #1a2a6a;border-bottom:none;background:#f8f9fb"></div>
<div style="left:1803.500px;top:971px;width:16px;height:16px;border-radius:8px;background:#141414"></div>
<svg style="left:1807px;top:974.500px" width="9" height="9" viewBox="0 0 9 9"><circle cx="5" cy="3.500" r="2.500" fill="none" stroke="#2fc3b0" stroke-width="1.400"/><path d="M3.200 5.500L.8 8.300" stroke="#2fc3b0" stroke-width="1.500"/></svg>
<div style="left:1824px;top:971px;width:16px;height:16px;border-radius:8px;background:#141414"></div>
<svg style="left:1828.500px;top:975.500px" width="7" height="7" viewBox="0 0 7 7"><path d="M.5.5l6 6M6.500.5l-6 6" stroke="#fff" stroke-width="1.500"/></svg>
<div style="left:1826px;top:1023px;width:15px;height:12px;background:#e6a3b6"></div>
<svg style="left:1830px;top:1024.500px" width="9" height="9" viewBox="0 0 9 9"><path d="M1 1l6.500 3.500L1 8z" fill="none" stroke="#4ab9e2" stroke-width="1.300"/></svg>

</div>

</div>

<!-- FILES WINDOW -->
<div id="files" class="abs">
<div class="hdr abs"></div>
</div>

<div id="filesc" class="abs">
<div style="left:72px;top:67px;width:189px;height:551px;background:#fafafa;border-right:1px solid #dcdcdc"></div>
<div style="left:72px;top:452px;width:188px;height:1px;background:#e6e6e6"></div>
<svg style="left:85px;top:81px" width="17" height="17" viewBox="0 0 17 17"><circle cx="8.500" cy="8.500" r="7" fill="none" stroke="#b0b0b0" stroke-width="1.300"/><path d="M8.500 4v5l3 1.500" fill="none" stroke="#b0b0b0" stroke-width="1.300"/><path d="M0 5l2.500 3.500L5 5z" fill="#fafafa"/></svg><div class="sbi" style="top:82px;color:#9b9b9b">Recent</div><svg style="left:85px;top:119px" width="17" height="17" viewBox="0 0 17 17"><path d="M8.500 1l2.300 5 5.400.6-4 3.700 1.100 5.400-4.800-2.700-4.800 2.700 1.100-5.400-4-3.700 5.400-.6z" fill="#b0b0b0"/></svg><div class="sbi" style="top:120px;color:#9b9b9b">Starred</div><svg style="left:85px;top:157px" width="17" height="17" viewBox="0 0 17 17"><path d="M1 9l7.500-7L16 9M3 8v8h11V8M9.500 16v-5h3v5M12.500 3v3" fill="none" stroke="#b0b0b0" stroke-width="1.300"/></svg><div class="sbi" style="top:158px;color:#9b9b9b">Home</div><svg style="left:85px;top:195px" width="17" height="17" viewBox="0 0 17 17"><rect x="1" y="2.500" width="15" height="12" rx="1.500" fill="none" stroke="#b0b0b0" stroke-width="1.300"/><rect x="1" y="2.500" width="3" height="12" fill="#b0b0b0"/></svg><div class="sbi" style="top:196px;color:#9b9b9b">Desktop</div><svg style="left:85px;top:233px" width="17" height="17" viewBox="0 0 17 17"><path d="M2 1h13v10l-4 5H2z" fill="none" stroke="#b0b0b0" stroke-width="1.300"/><path d="M5 5h7M5 8h7M5 11h4M15 11h-4v5" fill="none" stroke="#b0b0b0" stroke-width="1.100"/></svg><div class="sbi" style="top:234px;color:#9b9b9b">Documents</div><div style="left:72px;top:262px;width:189px;height:36px;background:#e95420"></div><svg style="left:85px;top:271px" width="17" height="17" viewBox="0 0 17 17"><path d="M3 15.500h11" fill="none" stroke="#fff" stroke-width="1.400"/><path d="M6 1h5v6.500h2.500l-5 5-5-5H6z" fill="none" stroke="#fff" stroke-width="1.200"/></svg><div class="sbi" style="top:272px;color:#fff">Downloads</div><svg style="left:85px;top:309px" width="17" height="17" viewBox="0 0 17 17"><path d="M5.500 13V3l9-2v10" fill="none" stroke="#b0b0b0" stroke-width="1.300"/><ellipse cx="3.500" cy="13.500" rx="2.500" ry="2" fill="#b0b0b0"/><ellipse cx="12.500" cy="11.500" rx="2.500" ry="2" fill="#b0b0b0"/></svg><div class="sbi" style="top:310px;color:#9b9b9b">Music</div><svg style="left:85px;top:347px" width="17" height="17" viewBox="0 0 17 17"><rect x="1" y="2" width="15" height="13" fill="none" stroke="#b0b0b0" stroke-width="1.300"/><path d="M3 13l4-5 3 3 2-2 3 4z" fill="#b0b0b0"/><circle cx="11.500" cy="5.500" r="1.300" fill="#b0b0b0"/></svg><div class="sbi" style="top:348px;color:#9b9b9b">Pictures</div><svg style="left:85px;top:385px" width="17" height="17" viewBox="0 0 17 17"><rect x="1" y="2" width="15" height="13" fill="none" stroke="#b0b0b0" stroke-width="1.300"/><path d="M4.500 2v13M12.500 2v13M1 6h3.500M1 10.500h3.500M12.500 6H16M12.500 10.500H16M4.500 8.500h8" stroke="#b0b0b0" stroke-width="1.100" fill="none"/></svg><div class="sbi" style="top:386px;color:#9b9b9b">Videos</div><svg style="left:85px;top:423px" width="17" height="17" viewBox="0 0 17 17"><path d="M3 5h10v11H3zM1.500 5h13M6 5V2.500h4V5M6 7.500v6M8 7.500v6M10 7.500v6" fill="none" stroke="#b0b0b0" stroke-width="1.200"/><circle cx="13" cy="13.500" r="2.800" fill="#fafafa" stroke="#b0b0b0" stroke-width="1.100"/></svg><div class="sbi" style="top:424px;color:#9b9b9b">Trash</div><svg style="left:85px;top:470px" width="17" height="17" viewBox="0 0 17 17"><path d="M8.500 2v13M2 8.500h13" stroke="#b0b0b0" stroke-width="1.200"/></svg><div class="sbi" style="top:471px;color:#9b9b9b">Other Locations</div>
<!-- header -->
<div class="hb" style="left:78px;top:33px;width:59px;height:28px"></div><div style="left:107px;top:34px;width:1px;height:26px;background:#2a2927"></div>
<svg style="left:86px;top:40px" width="44" height="14" viewBox="0 0 44 14"><path d="M7 1L2 7l5 6" fill="none" stroke="#c9c9c9" stroke-width="1.400"/><path d="M32 1l5 6-5 6" fill="none" stroke="#7a7977" stroke-width="1.400"/></svg>
<div class="hb" style="left:143px;top:33px;width:225px;height:28px"></div><div style="left:238px;top:34px;width:1px;height:26px;background:#2a2927"></div>
<svg style="left:152px;top:39px" width="16" height="16" viewBox="0 0 16 16"><path d="M1 8l7-6.500L15 8M2.800 7v8h10.400V7M9 15v-4.500h2.500V15M12.300 2.500v3" fill="none" stroke="#d0d0d0" stroke-width="1.300"/></svg>
<div style="left:182px;top:40px;color:#c6c6c6">Home</div>
<div style="left:255px;top:40px;color:#c6c6c6">Downloads</div>
<div class="wda" style="left:346px;top:45px;border-top-color:#cfcfcf"></div>
<div class="hb" style="left:699px;top:33px;width:29px;height:28px"></div>
<svg style="left:705px;top:39px" width="16" height="16" viewBox="0 0 16 16"><circle cx="7" cy="7" r="5.500" fill="none" stroke="#d0d0d0" stroke-width="1.300"/><path d="M11 11l4 4" stroke="#d0d0d0" stroke-width="1.600"/></svg>
<div class="hb" style="left:735px;top:33px;width:58px;height:28px"></div><div style="left:763px;top:34px;width:1px;height:26px;background:#2a2927"></div>
<svg style="left:742px;top:40px" width="15" height="13" viewBox="0 0 15 13"><path d="M4.500 2h10M4.500 6.500h10M4.500 11h10" stroke="#d0d0d0" stroke-width="1.200"/><rect x=".6" y=".8" width="2.200" height="2.200" fill="none" stroke="#d0d0d0" stroke-width=".9"/><rect x=".6" y="5.400" width="2.200" height="2.200" fill="none" stroke="#d0d0d0" stroke-width=".9"/><rect x=".6" y="10" width="2.200" height="2.200" fill="none" stroke="#d0d0d0" stroke-width=".9"/></svg>
<div class="wda" style="left:773px;top:45px;border-top-color:#cfcfcf"></div>
<div class="hb" style="left:800px;top:33px;width:29px;height:28px"></div>
<svg style="left:808px;top:41px" width="13" height="12" viewBox="0 0 13 12"><path d="M0 1.500h13M0 6h13M0 10.500h13" stroke="#d0d0d0" stroke-width="1.200"/></svg>
<div style="left:854px;top:49px;width:9px;height:1.500px;background:#cfcfcf"></div>
<div style="left:895px;top:43px;width:9px;height:9px;border:1.300px solid #cfcfcf"></div>
<div style="left:929px;top:37px;width:20px;height:20px;border-radius:10px;background:#5e5d5a"></div>
<svg style="left:934.500px;top:42.500px" width="9" height="9" viewBox="0 0 9 9"><path d="M1 1l7 7M8 1L1 8" stroke="#fff" stroke-width="1.600"/></svg>
<!-- file icon -->
<div style="left:320px;top:77px;width:42px;height:42px;border:1px solid #cdcdcd;border-radius:6px;background:#f6f6f6"></div>
<svg style="left:327px;top:84px" width="28" height="28" viewBox="0 0 28 28"><circle cx="14" cy="14" r="10.500" fill="none" stroke="#c4c4c4" stroke-width="3.200" stroke-dasharray="3.600 2.900"/><circle cx="14" cy="14" r="8.500" fill="none" stroke="#c4c4c4" stroke-width="2"/><circle cx="14" cy="14" r="6" fill="#fdfdfd" stroke="#cfcfcf" stroke-width=".8"/></svg>
<div style="left:302px;top:122px;width:78px;height:20px;background:#dedede;border-radius:2px"></div>
<div style="left:308px;top:124px;color:#6a6a6a;font-size:13px">Seamly2D</div>
</div>


<!-- SEAMLY2D WINDOW -->
<div id="seam" class="abs">

</div>


<div id="seamc" class="abs">
<div class="stitle"><div class="t ub">test_pattern.val [test_measurements.vit] - Seamly2D</div></div>
<div style="left:1159.500px;top:149px;width:9px;height:1.500px;background:#d6d6d6"></div>
<div style="left:1193.500px;top:142.500px;width:9px;height:9px;border:1.300px solid #d6d6d6"></div>
<div style="left:1222px;top:137px;width:20px;height:20px;border-radius:10px;background:#5e5d5a"></div>
<svg style="left:1227.500px;top:142.500px" width="9" height="9" viewBox="0 0 9 9"><path d="M1 1l7 7M8 1L1 8" stroke="#fff" stroke-width="1.600"/></svg>
<div class="menubar">
<span style="left:10px"><u>F</u>ile</span><span style="left:45px">Edit</span><span style="left:83px">View</span><span style="left:125px"><u>T</u>ools</span><span style="left:170px">Measurements</span><span style="left:273px">History</span><span style="left:330px">Utilities</span><span style="left:390px"><u>H</u>elp</span>
</div>
<div class="tb1"></div>
<div class="tb2"></div>

<div class="grip" style="left:155px;top:205px;height:19px"></div>
<div class="grip" style="left:362px;top:205px;height:19px"></div>
<div class="grip" style="left:598px;top:205px;height:19px"></div>
<div class="grip" style="left:943px;top:205px;height:19px"></div>
<div class="grip" style="left:1146px;top:205px;height:19px"></div>
<div class="btnp" style="left:375px;top:190px;width:49px;height:52px"></div>
<!-- New icon -->
<svg style="left:173px;top:192px" width="24" height="24" viewBox="0 0 24 24"><defs><linearGradient id="gpg" x1="0" y1="0" x2="1" y2="1"><stop offset="0" stop-color="#ffffff"/><stop offset="1" stop-color="#c9c9c9"/></linearGradient></defs><path d="M3 1h11l5 5v17H3z" fill="url(#gpg)" stroke="#b9b9b9" stroke-width=".8"/><path d="M14 1v5h5z" fill="#e4e4e4" stroke="#b9b9b9" stroke-width=".6"/><path d="M15 12h4v3.5h3.5v4H19V23h-4v-3.500h-3.500v-4H15z" fill="#4fb62a" stroke="#3c9a1c" stroke-width=".7"/></svg>
<!-- Open icon -->
<svg style="left:222px;top:192px" width="24" height="24" viewBox="0 0 24 24"><path d="M3 2l6 1.500v20L3 21z" fill="#e9c98a" stroke="#d1a85a" stroke-width=".7"/><path d="M9 3.500h9v17l4-2.500V22.500H9z" fill="#d9d9d9" stroke="#b5b5b5" stroke-width=".7"/><path d="M9 3.500l3-1.500h6v16H9z" fill="#f3f3f3" stroke="#c4c4c4" stroke-width=".6"/><path d="M3 2l2.500-.8 6 1.300L9 3.500z" fill="#f1dcae"/></svg>
<!-- Save icon (disabled) -->
<svg style="left:273px;top:192px" width="23" height="24" viewBox="0 0 23 24"><path d="M1 2h21v21H3.500L1 20.500z" fill="#c6c6c6"/><rect x="4" y="2" width="15" height="11" fill="#f3f3f3"/><rect x="6" y="16" width="12" height="7" fill="#b2b2b2"/><rect x="8" y="17.500" width="3" height="4.500" fill="#dcdcdc"/></svg>
<!-- Sync icon (disabled) -->
<svg style="left:322px;top:192px" width="22" height="24" viewBox="0 0 22 24"><path d="M4 12a7.500 7.500 0 0 1 11-6.500" fill="none" stroke="#c3c3c3" stroke-width="3.400"/><path d="M18 12a7.500 7.500 0 0 1-11 6.500" fill="none" stroke="#c3c3c3" stroke-width="3.400"/><path d="M12.500 1.500l5.500 3-3.500 4.500z" fill="#c3c3c3"/><path d="M9.500 22.500l-5.500-3 3.500-4.500z" fill="#c3c3c3"/></svg>
<!-- Draft icon -->
<svg style="left:386px;top:192px" width="26" height="24" viewBox="0 0 26 24"><path d="M2 4.500l4-3.500 17 17-4 3.500z" fill="#f5a93b" stroke="#e28d1f" stroke-width=".6"/><path d="M20 1.500l3.500 3.200L8 21.500l-5 2 1.200-5.200z" fill="#f7b04a" stroke="#d9851b" stroke-width=".6"/><path d="M20 1.500l3.500 3.200-2 2.100-3.400-3.200z" fill="#d24a43"/><path d="M3 23.500l1.200-5.200 3.800 3.200z" fill="#8a5a2c"/></svg>
<!-- arrows -->
<svg style="left:425px;top:207px" width="24" height="18" viewBox="0 0 24 18"><path d="M0 6h8V2.500L14.500 9 8 15.500V12H0z" fill="#3b66e0"/><path d="M12 3l6 6-6 6M17.500 3l6 6-6 6" fill="none" stroke="#3b66e0" stroke-width="2"/></svg>
<svg style="left:501px;top:205px" width="24" height="22" viewBox="0 0 24 22"><path d="M0 6.500h12V1l11.500 10L12 21v-5.500H0z" fill="#3b66e0"/></svg>
<!-- Piece icon -->
<svg style="left:463px;top:193px" width="24" height="24" viewBox="0 0 24 24"><path d="M1 23V9l5-7.500h4.500V23z" fill="#7d8a1e" stroke="#5f6b12" stroke-width=".7"/><path d="M14 23V3l3-2h2.500l1 2.500c0 3 2.500 4 2.500 7V23z" fill="#7d8a1e" stroke="#5f6b12" stroke-width=".7"/></svg>
<!-- Layout icon -->
<svg style="left:545px;top:193px" width="24" height="24" viewBox="0 0 24 24"><rect x=".6" y=".6" width="22.800" height="22.800" fill="#c5b5f2" stroke="#8f7be0" stroke-width="1.200"/><path d="M12 0v24" stroke="#6a5acd" stroke-width="1.200"/><path d="M2 3h8v6c-3 0-4 1-4 3H2zM2 14h5c0 3 1 4 3 4v4H2zM14 3h4c0 2 1 3 4 3v4c-4 0-4 2-8 1zM14 14c3-1 5 1 8 0v8h-8z" fill="#fff"/></svg>
<!-- New Draft Block icon -->
<svg style="left:652px;top:192px" width="26" height="25" viewBox="0 0 26 25"><path d="M4 24l-2-6 2-7-1-5 4-5h3l1 2 3-2h3l2 6v8l2 5-3 4z" fill="#fafafa" stroke="#bdbdbd" stroke-width="1"/><path d="M16.500 13h4v3.500H24v4h-3.500V24h-4v-3.500H13v-4h3.500z" fill="#6aa52e" stroke="#4f861c" stroke-width=".7"/></svg>
<!-- Undo icon -->
<svg style="left:1017px;top:194px" width="20" height="22" viewBox="0 0 20 22"><defs><linearGradient id="gun" x1="0" y1="0" x2="0" y2="1"><stop offset="0" stop-color="#58b6f0"/><stop offset="1" stop-color="#1d74c9"/></linearGradient></defs><path d="M0 7.500L8.500 0v4.500c7 0 11 4 11 9 0 4-2.500 7-6.500 8.500 2-2 2.500-4.500 1.500-6.500-1-2-3-3-6-3v5z" fill="url(#gun)"/></svg>
<div class="tl" style="left:155px;width:60px"><u>N</u>ew</div>
<div class="tl" style="left:204px;width:60px"><u>O</u>pen</div>
<div class="tl dis" style="left:254px;width:60px"><u>S</u>ave</div>
<div class="tl dis" style="left:303px;width:60px">Sync</div>
<div class="tl" style="left:369px;width:60px">Draft</div>
<div class="tl" style="left:445px;width:60px">Piece</div>
<div class="tl" style="left:527px;width:60px">Layout</div>
<div class="tl" style="left:605px;width:120px">New Draft Block</div>
<div class="tl" style="left:727px;top:208px">Draft Block:</div>
<div class="combo" style="left:805px;top:203px;width:127px;height:25px"></div>
<div class="tl" style="left:811px;top:208px">Pattern piece 1</div>
<div class="da" style="left:916px;top:214px"></div>
<div class="tl" style="left:948px;width:160px">Undo save tool option</div>
<div style="left:1127px;top:205px;font-size:15px;color:#444">»</div>
<div style="left:1237px;top:204px;font-size:15px;color:#444">»</div>
<div class="field" style="left:1153px;top:205px;width:80px;height:22px"></div>
<div style="left:1218px;top:206px;width:14px;height:20px;border-left:1px solid #c9c9c9;background:linear-gradient(#fbfbfb,#eee);border-radius:0 2px 2px 0"></div>
<div class="tl" style="left:1153px;top:208px;width:59px;text-align:right">48.7%</div>
<svg style="left:1221px;top:209px" width="8" height="14" viewBox="0 0 8 14"><path d="M0 5l4-4.500L8 5zM0 9l4 4.500L8 9z" fill="#4a4a4a"/></svg>
<!-- toolbar 2 -->
<div class="grip" style="left:155px;top:254px;height:24px"></div>
<div class="grip" style="left:557px;top:254px;height:24px"></div>
<div class="field" style="left:163px;top:254px;width:206px;height:23px"></div>
<div style="left:348px;top:255px;width:20px;height:21px;border-left:1px solid #c9c9c9;background:linear-gradient(#fbfbfb,#ededed);border-radius:0 2px 2px 0"></div>
<div class="da" style="left:353px;top:263px"></div>
<div style="left:167px;top:259px;font-size:12px">DejaVu Sans</div>
<div class="combo" style="left:370px;top:254px;width:45px;height:23px"></div>
<div style="left:375px;top:259px;font-size:12px">32</div>
<div class="da" style="left:399px;top:263px"></div>
<div class="btnp" style="left:631px;top:250px;width:31px;height:31px"></div>
<div class="btnp" style="left:664px;top:250px;width:31px;height:31px"></div>
<div class="btnp" style="left:697px;top:250px;width:31px;height:31px"></div>
<div class="btnp" style="left:729px;top:250px;width:32px;height:31px"></div>
<!-- eye -->
<svg style="left:420px;top:257px" width="24" height="16.600" viewBox="0 0 26 18"><path d="M1 9C5 2 21 2 25 9 21 16 5 16 1 9z" fill="#fff" stroke="#2a2a2a" stroke-width="2.600"/><circle cx="13" cy="8.500" r="5" fill="#2a2a2a"/><circle cx="11" cy="6.500" r="1.700" fill="#fff"/></svg>
<!-- A+ A- -->
<svg style="left:455px;top:254px" width="22" height="22" viewBox="0 0 22 22"><text x="0" y="19.500" font-size="22.500" font-weight="bold" font-family="Liberation Sans, sans-serif" fill="#111" textLength="14" lengthAdjust="spacingAndGlyphs">A</text><path d="M16.500 1l3 4.500h-6z" fill="#3f74e0"/></svg>
<svg style="left:490px;top:254px" width="20" height="22" viewBox="0 0 20 22"><text x="0" y="19.500" font-size="18" font-weight="bold" font-family="Liberation Sans, sans-serif" fill="#111" textLength="12" lengthAdjust="spacingAndGlyphs">A</text><path d="M11.500 2.500h6l-3 4.500z" fill="#3f74e0"/></svg>
<!-- A paint -->
<svg style="left:520px;top:252px" width="24" height="28" viewBox="0 0 24 28"><path d="M14 7l9 6-7 8-8-7z" fill="#b9b9b9"/><path d="M3 17c0-5 3-8 8-8" fill="none" stroke="#5b87d6" stroke-width="1.600"/><path d="M13 9l3-8" stroke="#222" stroke-width="1.300"/><text x="0" y="27" font-size="11" font-weight="bold" font-family="Liberation Sans, sans-serif" fill="#111">A</text></svg>
<!-- square with nodes -->
<svg style="left:567px;top:253px" width="24" height="24" viewBox="0 0 24 24"><path d="M4 5.500l15-1.500-1.500 15H4z" fill="none" stroke="#222" stroke-width="1.700"/><circle cx="19.500" cy="4" r="2.800" fill="#fff" stroke="#4a7fd6" stroke-width="1.400"/><circle cx="4" cy="19.500" r="2.800" fill="#fff" stroke="#4a7fd6" stroke-width="1.400"/></svg>
<!-- curve -->
<svg style="left:600px;top:253px" width="25" height="25" viewBox="0 0 25 25"><path d="M3 22C3 8 5 3 8 3c4 0 5 17 9 17 3 0 4-8 6-14" fill="none" stroke="#4a7fd6" stroke-width="1.600"/><path d="M2 1.500h12M14 1.500l3 18M23 6l-4 15" stroke="#7a9fe0" stroke-width=".8" fill="none"/><circle cx="3" cy="22" r="1.400" fill="#4a7fd6"/><circle cx="17" cy="21" r="1.400" fill="#4a7fd6"/><circle cx="23" cy="6" r="1.400" fill="#4a7fd6"/><circle cx="2.500" cy="1.500" r="1.300" fill="#4a7fd6"/></svg>
<!-- crosshair -->
<svg style="left:635px;top:254px" width="23" height="23" viewBox="0 0 23 23"><circle cx="11.500" cy="11.500" r="5" fill="none" stroke="#3a73d8" stroke-width="1.800"/><path d="M11.500 0v23M0 11.500h23" stroke="#111" stroke-width="1.700"/></svg>
<!-- chevrons -->
<svg style="left:668px;top:255px" width="24" height="21" viewBox="0 0 24 21"><path d="M1 1.500l14 9-14 9M8 2l15 8.500L8 19" fill="none" stroke="#555" stroke-width="1.300"/></svg>
<!-- vertical arrow -->
<svg style="left:707px;top:255px" width="10" height="21" viewBox="0 0 10 21"><path d="M5 2v17" stroke="#444" stroke-width="1.300"/><path d="M2.500 5L5 .5 7.500 5zM2.500 16L5 20.500 7.500 16z" fill="#333"/></svg>
<!-- tag -->
<svg style="left:733px;top:253px" width="26" height="25" viewBox="0 0 26 25"><path d="M1.500 14L13 2.500l9.500-1.500 1.500 1.500-1.500 9.500L11 23.500c-1 1-2 1-3 0L1.500 17c-1-1-1-2 0-3z" fill="#8d8d8d" stroke="#666" stroke-width=".9"/><circle cx="19.500" cy="6" r="1.700" fill="#e6e6e6"/><circle cx="10.500" cy="15" r="3.600" fill="none" stroke="#d9d9d9" stroke-width="1.100"/><circle cx="10.500" cy="15" r="1.200" fill="#d9d9d9"/></svg>

<!-- Toolbox dock -->
<div class="dockt" style="left:154px;top:288px">Toolbox</div>
<svg style="left:263px;top:289px" width="25" height="11" viewBox="0 0 25 11"><rect x=".5" y=".5" width="10" height="10" rx="2" fill="none" stroke="#666"/><rect x="4.500" y="2.500" width="4" height="3.500" fill="none" stroke="#444" stroke-width=".9"/><rect x="2.500" y="4.500" width="4" height="3.500" fill="#efefef" stroke="#444" stroke-width=".9"/><rect x="14.500" y=".5" width="10" height="10" rx="2" fill="none" stroke="#666"/><path d="M17 3l5 5M22 3l-5 5" stroke="#333" stroke-width="1.700"/></svg>
<div class="btnp" style="left:156px;top:310px;width:40px;height:39px;background:#d9d9d9"></div>
<svg style="left:167px;top:313px" width="20" height="31" viewBox="0 0 20 31"><path d="M1.500 1.500v24l5.500-5 4 9 3.500-1.500-4-9h7.500z" fill="#fff" stroke="#111" stroke-width="1.500" stroke-linejoin="round"/></svg>
<svg style="left:155px;top:356px" width="126" height="24" viewBox="0 0 126 24"><path d="M1 .5h82.500l22 22H125" fill="none" stroke="#6e6e6e" stroke-width="1"/><circle cx="7" cy="4" r="1" fill="#444"/><path d="M7 12v3M5.500 13.500h3M17 8v3M15.500 9.500h3" stroke="#444" stroke-width=".8"/><path d="M20 17v3h-3z" fill="#222"/></svg><div class="tabl" style="left:181px;top:360px">Point</div><svg style="left:155px;top:385px" width="126" height="24" viewBox="0 0 126 24"><path d="M1 .5h82.500l22 22H125" fill="none" stroke="#6e6e6e" stroke-width="1"/><path d="M6 16L17 4" stroke="#222" stroke-width="1.200"/><circle cx="6" cy="16" r="1.200" fill="#222"/><circle cx="17" cy="4" r="1.200" fill="#222"/><path d="M20 17v3h-3z" fill="#222"/></svg><div class="tabl" style="left:180px;top:389px">Line</div><svg style="left:155px;top:414px" width="126" height="24" viewBox="0 0 126 24"><path d="M1 .5h82.500l22 22H125" fill="none" stroke="#6e6e6e" stroke-width="1"/><path d="M5 4c0 8 4 13 6 11s3-9 5-11c2-1 2 6 2 8M5 4c2-2 5 2 7 6s4 5 6 2" fill="none" stroke="#333" stroke-width=".9"/><path d="M20 17v3h-3z" fill="#222"/></svg><div class="tabl" style="left:181px;top:418px">Curve</div><svg style="left:155px;top:443px" width="126" height="24" viewBox="0 0 126 24"><path d="M1 .5h82.500l22 22H125" fill="none" stroke="#6e6e6e" stroke-width="1"/><path d="M5 18C4 10 9 4 17 4" fill="none" stroke="#333" stroke-width="1"/><path d="M20 17v3h-3z" fill="#222"/></svg><div class="tabl" style="left:181px;top:447px">Arc</div><svg style="left:155px;top:763px" width="126" height="24" viewBox="0 0 126 24"><path d="M1 .5h82.500l22 22H125" fill="none" stroke="#6e6e6e" stroke-width="1"/><circle cx="12" cy="11" r="4.500" fill="none" stroke="#333" stroke-width="1.200"/><circle cx="12" cy="11" r="6.500" fill="none" stroke="#333" stroke-width="2" stroke-dasharray="2.200 2.900"/><path d="M20 17v3h-3z" fill="#222"/></svg><div class="tabl" style="left:181px;top:767px">Operati...</div><svg style="left:155px;top:792px" width="126" height="24" viewBox="0 0 126 24"><path d="M1 .5h82.500l22 22H125" fill="none" stroke="#6e6e6e" stroke-width="1"/><path d="M6 5v12h12M9 2v12h12V8M9 5H5M9 8h6V5" fill="none" stroke="#222" stroke-width="1.300"/><path d="M20 17v3h-3z" fill="#222"/></svg><div class="tabl" style="left:181px;top:796px">Piece</div>
<div class="toolb" style="left:164px;top:479px"></div><svg style="left:164px;top:479px" width="39" height="38" viewBox="0 0 39 38"><path d="M15 7c9 2 15 9 17 17" fill="none" stroke="#e8261a" stroke-width="1.500"/><circle cx="8.500" cy="30" r="2.500" fill="#1a0a0a"/></svg><div class="toolb" style="left:210px;top:479px"></div><svg style="left:210px;top:479px" width="39" height="38" viewBox="0 0 39 38"><path d="M5 8c14-2 27 8 27 24" fill="none" stroke="#1a0a0a" stroke-width="2"/><circle cx="20" cy="10" r="2.500" fill="#e8261a"/></svg><div class="toolb" style="left:164px;top:522px"></div><svg style="left:164px;top:522px" width="39" height="38" viewBox="0 0 39 38"><path d="M5 18c2 6 9 9 15 6s7-9 5-16" fill="none" stroke="#1a0a0a" stroke-width="2.200"/><path d="M6 4l26 29" stroke="#e8261a" stroke-width="1.600" stroke-dasharray="3 2"/><circle cx="20" cy="19" r="2.500" fill="#e8261a"/><circle cx="32" cy="33" r="2.500" fill="#1a0a0a"/></svg><div class="toolb" style="left:210px;top:522px"></div><svg style="left:210px;top:522px" width="39" height="38" viewBox="0 0 39 38"><path d="M4 5C15 4 27 12 25 25c-1 5-3 8-5.500 11" fill="none" stroke="#2030d0" stroke-width="1.500"/><path d="M35 5C24 4 12 12 14 25c1 5 3 8 5.500 11" fill="none" stroke="#2aa02a" stroke-width="1.500"/><circle cx="19.500" cy="9" r="2.500" fill="#e8261a"/><circle cx="10" cy="19" r="2.500" fill="#1a0a0a"/><circle cx="30" cy="19" r="2.500" fill="#1a0a0a"/></svg><div class="toolb" style="left:164px;top:565px"></div><svg style="left:164px;top:565px" width="39" height="38" viewBox="0 0 39 38"><circle cx="24" cy="14" r="10.500" fill="none" stroke="#2030d0" stroke-width="1.400" stroke-dasharray="4 2.500"/><circle cx="15" cy="24" r="10.500" fill="none" stroke="#2aa02a" stroke-width="1.400" stroke-dasharray="4 2.500"/><circle cx="13.500" cy="13.500" r="2.500" fill="#e8261a"/><circle cx="26" cy="24" r="2.500" fill="#e8261a"/></svg><div class="toolb" style="left:210px;top:565px"></div><svg style="left:210px;top:565px" width="39" height="38" viewBox="0 0 39 38"><circle cx="14" cy="20" r="10" fill="none" stroke="#2aa02a" stroke-width="1.400" stroke-dasharray="4 2.500"/><path d="M4 5l30 15L4 35" fill="none" stroke="#e8261a" stroke-width="1.500" stroke-dasharray="3 2"/><circle cx="14" cy="20" r="2.500" fill="#1a0a0a"/><circle cx="33" cy="20" r="2.500" fill="#1a0a0a"/><circle cx="17" cy="11" r="2.500" fill="#e8261a"/><circle cx="17" cy="29" r="2.500" fill="#e8261a"/></svg><div class="toolb" style="left:164px;top:608px"></div><svg style="left:164px;top:608px" width="39" height="38" viewBox="0 0 39 38"><path d="M5 17c12-8 26 2 22 20" fill="none" stroke="#2aa02a" stroke-width="1.600"/><path d="M10 4l23 22" stroke="#e8261a" stroke-width="1.500" stroke-dasharray="3 2"/><circle cx="23" cy="16" r="2.500" fill="#e8261a"/><circle cx="33" cy="26" r="2.500" fill="#1a0a0a"/></svg><div class="toolb" style="left:210px;top:608px"></div><svg style="left:210px;top:608px" width="39" height="38" viewBox="0 0 39 38"><path d="M34 16A14.500 14.500 0 1 0 20 34" fill="none" stroke="#1a0a0a" stroke-width="1.800"/><path d="M28 19A8.500 8.500 0 1 0 20 28" fill="none" stroke="#2aa02a" stroke-width="1.500"/><path d="M20 20l14-4" stroke="#e8261a" stroke-width="1.400" stroke-dasharray="3 2"/><circle cx="20" cy="20" r="2.500" fill="#e8261a"/></svg><div class="toolb" style="left:164px;top:651px"></div><svg style="left:164px;top:651px" width="39" height="38" viewBox="0 0 39 38"><path d="M11 14c8-9 18-12 20-7s-6 20-17 26" fill="none" stroke="#e8261a" stroke-width="1.700"/><circle cx="17" cy="20" r="2.500" fill="#1a0a0a"/></svg>
<div class="grip" style="left:293px;top:600px;height:15px;width:3px"></div>
<div class="grip" style="left:972px;top:600px;height:15px;width:3px"></div>
<!-- Canvas -->
<div style="left:300px;top:289px;width:666px;height:635px;background:#fff;border:1px solid #b9b9b9"></div>
<div style="left:956px;top:290px;width:9px;height:622px;background:#f1f1f1;border-left:1px solid #cfcfcf"></div>
<div style="left:956px;top:887px;width:9px;height:12px;background:#e3e3e3;border:1px solid #c6c6c6"></div>
<div style="left:301px;top:913px;width:655px;height:10px;background:#f1f1f1;border-top:1px solid #cfcfcf"></div>
<div style="left:956px;top:912px;width:9px;height:11px;background:#efefef"></div>
<svg style="left:300px;top:289px" width="666" height="635" viewBox="300 289 666 635">
<path d="M957.500 298.500l3-4 3 4zM957.500 903l3 4 3-4zM309 915l-4 3.500 4 3.500zM945 915l4 3.500-4 3.500z" fill="#444"/>
<path d="M956.500 301.500h9M956.500 900.500h9M313.500 913v10M940.500 913v10" stroke="#cfcfcf" stroke-width="1" fill="none"/>
<g fill="none" stroke="#404040" stroke-width=".95">
<path d="M432 483Q444 458 476 453" stroke-dasharray="5 3"/>
<path d="M485.300 514.200L419.200 588M485.300 514.200V654.500M438.600 654.500H672.200M438.600 654.500V794.500M419.200 588L485.300 654.500M485.300 547.500L532.200 654.500M568.600 654.500V737.800M438.600 694.800L568.600 737.800M532.200 654.500L672.200 737.800"/>
<path d="M568.600 737.800H672.200M672.200 654.500V737.800" stroke-dasharray="4 3"/>
<path d="M419.200 588C384.300 493.900 677.600 653 568.600 737.800"/>
<path d="M419.200 588C440 600 452 540 471.700 555.800"/>
<path d="M485.300 514.200C505 538 545 577 570 595.800C598 625 638 646 672.200 654.500"/>
<path d="M438.600 654.500C470 720 590 720 672.200 654.500"/>
<path d="M419.200 588C426 620 436 665 438.600 694.800"/>
</g>
<g fill="#000">
<circle cx="485.300" cy="514.200" r="3.700"/><circle cx="485.300" cy="547.500" r="3.700"/><circle cx="471.700" cy="555.800" r="3.700"/><circle cx="419.200" cy="588" r="3.700"/><circle cx="570" cy="595.800" r="3.700"/>
<circle cx="438.600" cy="654.500" r="3.700"/><circle cx="485.300" cy="654.500" r="3.700"/><circle cx="532.200" cy="654.500" r="3.700"/><circle cx="568.600" cy="654.500" r="3.700"/><circle cx="672.200" cy="654.500" r="3.700"/>
<circle cx="438.600" cy="694.800" r="3.700"/><circle cx="568.600" cy="737.800" r="3.700"/><circle cx="672.200" cy="737.800" r="3.700"/><circle cx="438.600" cy="794.500" r="3.700"/>
</g>
<g fill="none" stroke="#f0f" stroke-width="1.300"><path d="M418 634.700h31M441 629l8.500 5.700-8.500 5.700M424.200 629v31M418.500 652l5.700 8.500 5.700-8.500"/></g>
<text x="449.500" y="639" font-size="9.500" fill="#f0f" font-family="DejaVu Sans, sans-serif">X</text><text x="419.500" y="671.500" font-size="9.500" fill="#f0f" font-family="DejaVu Sans, sans-serif">Y</text>
<g class="gl"><text x="487.500" y="538.700">A5</text><text x="473.500" y="579.200">A12</text><text x="494.500" y="602.300">A7</text><text x="422" y="612.500">A6</text><text x="572" y="619.700">A13</text>
<text x="441" y="679">A</text><text x="488.500" y="679">A4</text><text x="535" y="679">A3</text><text x="572" y="679">A10</text><text x="675" y="679">A2</text>
<text x="441" y="719">A11</text><text x="571" y="763">A8</text><text x="675" y="763">A9</text><text x="441" y="818.500">A1</text></g>
</svg>
<!-- right docks -->
<div class="dockt" style="left:980px;top:288px">Property Editor</div>
<svg style="left:1223px;top:289px" width="25" height="11" viewBox="0 0 25 11"><rect x=".5" y=".5" width="10" height="10" rx="2" fill="none" stroke="#666"/><rect x="4.500" y="2.500" width="4" height="3.500" fill="none" stroke="#444" stroke-width=".9"/><rect x="2.500" y="4.500" width="4" height="3.500" fill="#efefef" stroke="#444" stroke-width=".9"/><rect x="14.500" y=".5" width="10" height="10" rx="2" fill="none" stroke="#666"/><path d="M17 3l5 5M22 3l-5 5" stroke="#333" stroke-width="1.700"/></svg>
<div style="left:977px;top:305px;width:273px;height:460px;border:1px solid #d2d2d2;border-right:none;background:#efefef"></div>
<div style="left:978px;top:309px;width:272px;height:455px;background:#ebebeb;border-left:1px solid #d9d9d9;border-top:1px solid #dcdcdc"></div>
<div class="grip" style="left:1106px;top:766px;height:3px;width:14px"></div>
<div class="dockt" style="left:980px;top:774px">Group Manager</div>
<svg style="left:1223px;top:775px" width="25" height="11" viewBox="0 0 25 11"><rect x=".5" y=".5" width="10" height="10" rx="2" fill="none" stroke="#666"/><rect x="4.500" y="2.500" width="4" height="3.500" fill="none" stroke="#444" stroke-width=".9"/><rect x="2.500" y="4.500" width="4" height="3.500" fill="#efefef" stroke="#444" stroke-width=".9"/><rect x="14.500" y=".5" width="10" height="10" rx="2" fill="none" stroke="#666"/><path d="M17 3l5 5M22 3l-5 5" stroke="#333" stroke-width="1.700"/></svg>
<div style="left:985px;top:799px;width:256px;height:120px;background:#fff;border:1px solid #b9b9b9"></div>
<!-- status -->
<div style="left:150px;top:928px;width:1100px;height:23px;background:linear-gradient(#f6f6f6,#ececec)"></div><div class="grip" style="left:155px;top:931px;height:18px;width:3px"></div>
<div style="left:163px;top:933px;font-size:13px">XPos: 10.26, YPos: -4.23 (inch)</div>
<div style="left:150px;top:951px;width:1100px;height:1px;background:#c4c4c4"></div>
<div style="left:150px;top:952px;width:1100px;height:23px;background:linear-gradient(#f6f6f6,#ececec)"></div>
<div style="left:152px;top:958px;font-size:12px">File saved</div>

<div style="left:510px;top:307px;width:322px;height:110px;border-radius:7px 7px 0 0;box-shadow:0 8px 22px 1px rgba(0,0,0,.38),0 0 0 1px rgba(0,0,0,.3);background:#efefef"></div>
<div style="left:510px;top:307px;width:322px;height:37px;border-radius:7px 7px 0 0;background:#2e2d2c;border-top:1px solid #4a4947"></div>
<div class="ub" style="left:510px;top:318px;width:322px;text-align:center;color:#fff;font-weight:bold;font-size:14.6px">Warning</div>
<div style="left:804px;top:315px;width:19px;height:19px;border-radius:10px;background:#e9541f"></div>
<svg style="left:809px;top:320px" width="9" height="9" viewBox="0 0 9 9"><path d="M1 1l7 7M8 1L1 8" stroke="#fff" stroke-width="1.500"/></svg>
<svg style="left:521px;top:355px" width="17" height="16" viewBox="0 0 17 16"><path d="M8.500 1L16 14.500H1z" fill="#f3c62f" stroke="#c79a12" stroke-width="1" stroke-linejoin="round"/><path d="M8.500 5.500v5" stroke="#222" stroke-width="1.700"/><circle cx="8.500" cy="12.500" r="1" fill="#222"/></svg>
<div style="left:556px;top:356px;font-size:12px">QFSFileEngine::open: No file name specified</div>
<div style="left:741px;top:382px;width:80px;height:24px;border:1px solid #2f6fb4;border-radius:3px;background:linear-gradient(#fdfdfd,#ececec);box-shadow:inset 0 0 0 1px #a9c7ea"></div>
<svg style="left:762px;top:386px" width="16" height="15" viewBox="0 0 16 15"><path d="M7.500 1H14v8H7v4L.8 7.500 7 2.500v3h3V1z" fill="#6d7b4c" stroke="#3f4a2a" stroke-width=".8" stroke-linejoin="round"/></svg>
<div style="left:778px;top:388px;font-size:12px"><u style="text-underline-offset:2px">O</u>K</div>


</div>

<!-- TOP BAR -->
<div id="topbar" class="abs ub">

<span style="left:12.500px;top:7px">Activities</span>
<svg style="left:110px;top:1px" width="15" height="24" viewBox="0 0 15 24"><rect x="1" y="1" width="13" height="1.300" fill="#cfcfcf"/><rect x="1" y="22.500" width="13" height="1.300" fill="#cfcfcf"/><path d="M2 4c0-1.500 11-1.500 11 0v13l-1 3v-4l-1.200 0v4l-1-4h-1.200v4l-1-4H6.400v4l-1.200-4H4v4l-1-3z" fill="#bdbdbd"/><path d="M4 6.500c0-3 7-3 7-.5s-4.500 2.500-4.500.8 2-1.300 2.300-.4" fill="none" stroke="#2a2a2a" stroke-width="1"/></svg>
<span style="left:131px;top:7px">SeamlyMe</span>
<div class="wda" style="left:206px;top:10px"></div>
<span style="left:952px;top:7px">Nov 14</span><span style="left:1005.300px;top:7px">15:56</span>
<span style="left:1744px;top:7px">en<span style="position:static;font-size:8px">1</span></span>
<div class="wda" style="left:1772px;top:10px"></div>
<svg style="left:1812px;top:6px" width="18" height="14" viewBox="0 0 18 14"><path d="M9 13.500L.5 3.500C5 -.5 13 -.5 17.500 3.500z" fill="#f2f2f2"/><path d="M2.200 5.200C6 2 12 2 15.800 5.200" fill="none" stroke="#1f1f1f" stroke-width="1.100"/></svg>
<svg style="left:1841px;top:6px" width="17" height="15" viewBox="0 0 17 15"><path d="M0 5h3l4.500-4.500v14L3 10H0z" fill="#f2f2f2"/><path d="M9.500 4.500c1.500 1.500 1.500 4.500 0 6M11.500 2c3 3 3 8 0 11" fill="none" stroke="#f2f2f2" stroke-width="1.300"/></svg>
<svg style="left:1869px;top:4px" width="16" height="17" viewBox="0 0 16 17"><path d="M3.500 4L.5 9.500h2.500L1.500 14l3-6H2z" fill="#f2f2f2"/><rect x="6.500" y="2.500" width="8" height="13.500" rx="1" fill="none" stroke="#f2f2f2" stroke-width="1.400"/><rect x="8.500" y=".8" width="4" height="1.700" fill="#f2f2f2"/><rect x="8.300" y="8" width="4.400" height="6.200" fill="#f2f2f2"/></svg>
<div class="wda" style="left:1895px;top:10px"></div>

</div>

<!-- DOCK -->
<div id="dock" class="abs">

<div class="abs" style="left:4px;top:684px;width:64px;height:64px;border-radius:6px;background:#493a4a"></div>
<div class="dot" style="top:101px"></div><div class="dot" style="top:237px"></div><div class="dot" style="top:577px"></div><div class="dot" style="top:645px"></div><div class="dot" style="top:712px"></div>
<!-- ubuntu -->
<svg style="left:10px;top:12px" width="50" height="50" viewBox="0 0 50 50"><circle cx="26" cy="25" r="22.500" fill="#e95420"/><g fill="#e95420"><rect x="1" y="2" width="4" height="4"/><rect x="7" y="1" width="4" height="4"/><rect x="13" y="3" width="4" height="4"/><rect x="4" y="8" width="4" height="4"/><rect x="10" y="9" width="4" height="4"/><rect x="1" y="14" width="4" height="4"/><rect x="19" y="1" width="4" height="4"/></g><g fill="#2c1a2c"><rect x="7" y="6" width="3.500" height="3.500"/><rect x="13" y="8" width="3.500" height="3.500"/><rect x="4" y="13" width="3.500" height="3.500"/><rect x="10" y="14" width="3.500" height="3.500"/><rect x="16" y="3" width="3.500" height="3.500"/></g><circle cx="26" cy="25" r="9.800" fill="none" stroke="#fff" stroke-width="5.400"/><g stroke="#e95420" stroke-width="2"><path d="M26 25L10 25M26 25l8-14M26 25l8 14"/></g><circle cx="11.500" cy="25" r="3.600" fill="#fff" stroke="#e95420" stroke-width="1.200"/><circle cx="33.200" cy="12.500" r="3.600" fill="#fff" stroke="#e95420" stroke-width="1.200"/><circle cx="33.200" cy="37.500" r="3.600" fill="#fff" stroke="#e95420" stroke-width="1.200"/></svg>
<!-- firefox -->
<svg style="left:13px;top:79px" width="46" height="47" viewBox="0 0 46 47"><defs><linearGradient id="ffg" x1=".85" y1=".1" x2=".25" y2=".95"><stop offset="0" stop-color="#fff36b"/><stop offset=".3" stop-color="#ffb017"/><stop offset=".6" stop-color="#ff6a2a"/><stop offset=".85" stop-color="#ff2f54"/><stop offset="1" stop-color="#e31587"/></linearGradient></defs><path d="M23 9c2-4 5-6 8-9 0 5 3 8 7 11 5 4 8 10 8 16A23 21 0 0 1 0 27c0-5 1-9 3-12 0 2 1 3 2 4 0-4 2-7 5-10 0 3 1 4 3 5 1-3 4-5 7-6 0 1 1 1 3 1z" fill="url(#ffg)"/><circle cx="23" cy="26" r="9.500" fill="#7a45e0"/><path d="M12 23c2-6 9-9 16-6l3 2c-4-1-7 0-7 3 0 2 2 4 5 4-3 4-9 3-12 0-2-1-4-2-5-3z" fill="#ff9d1c"/><path d="M19 14c4-2 9-1 12 3-3-1-6-1-8 1-1-2-2-3-4-4z" fill="#9a5cf5"/><path d="M29 12c5 3 8 9 7 15 2-5 1-12-7-15z" fill="#ffd23a"/></svg>
<!-- thunderbird -->
<svg style="left:12px;top:148px" width="48" height="48" viewBox="0 0 48 48"><defs><linearGradient id="tbg" x1="0" y1="0" x2="1" y2="1"><stop offset="0" stop-color="#2f8fe8"/><stop offset="1" stop-color="#1546a8"/></linearGradient></defs><circle cx="25" cy="25" r="22" fill="url(#tbg)"/><path d="M6 16C12 2 32-2 43 10c4 5 6 13 3 21-1-10-7-17-17-19-7-2-14 1-23 4z" fill="#4aa0f0"/><path d="M13 14c1-3 4-5 7-6-1 2-1 4 0 6z" fill="#12306e"/><path d="M3 27l4-11 4 5 12-6 11 7 3 6-3 12-16 2-13-7z" fill="#f6f6fa"/><path d="M12 21l9 9 14-7" fill="none" stroke="#c7c8d6" stroke-width="1.300"/><path d="M3 31c2 9 11 16 22 16 9 0 17-5 21-13-8 7-19 8-28 4S7 36 3 31z" fill="#14377f"/></svg>
<!-- files -->
<svg style="left:13px;top:217px" width="46" height="46" viewBox="0 0 46 46"><rect x=".5" y=".5" width="45" height="45" rx="6" fill="#a59f8f"/><rect x="1.500" y="1" width="43" height="41" rx="5" fill="#b3ad9d"/><path d="M7 14c0-2 1-3 3-3h8l3 3h15c2 0 3 1 3 3v17c0 2-1 3-3 3H10c-2 0-3-1-3-3z" fill="#f5f3ef"/><path d="M7 17h32" stroke="#e3dfd6" stroke-width="1"/></svg>
<!-- rhythmbox -->
<svg style="left:17px;top:286px" width="38" height="45" viewBox="0 0 38 45"><rect x=".5" y=".5" width="37" height="44" rx="6" fill="#e8e3d6"/><rect x=".5" y="38" width="37" height="6.500" rx="3" fill="#cfc9b8"/><circle cx="19" cy="22" r="17" fill="#1d1d1d"/><circle cx="19" cy="22" r="11.500" fill="#f1c40f"/><circle cx="19" cy="22" r="6" fill="#3a3a3a"/><circle cx="19" cy="22" r="3" fill="#111"/></svg>
<!-- writer -->
<svg style="left:17px;top:353px" width="38" height="46" viewBox="0 0 38 46"><path d="M3 1h23l11 11v30c0 2-1 3-3 3H4c-2 0-3-1-3-3V4c0-2 1-3 2-3z" fill="#fdfdfd" stroke="#1a7db3" stroke-width="2"/><path d="M26 1l11 11H29c-2 0-3-1-3-3z" fill="#1a6a9b"/><g fill="#1a7db3"><rect x="6" y="17" width="8" height="2.200"/><rect x="6" y="22" width="8" height="2.200"/><rect x="6" y="27" width="8" height="2.200"/><rect x="6" y="32" width="25" height="2.200"/><rect x="6" y="37" width="17" height="2.200"/></g><rect x="17" y="16" width="14" height="12" fill="#8fb6d6"/><path d="M17 28l5-7 3 4 2-2 4 5z" fill="#555"/><circle cx="28" cy="19" r="1.500" fill="#f5d020"/></svg>
<!-- software -->
<svg style="left:13px;top:420px" width="46" height="42" viewBox="0 0 46 42"><path d="M15 9c0-8 16-8 16 0" fill="none" stroke="#f3c9a6" stroke-width="2.500"/><defs><linearGradient id="swg" x1="0" y1="0" x2="0" y2="1"><stop offset="0" stop-color="#f0642a"/><stop offset="1" stop-color="#e8501f"/></linearGradient></defs><rect x=".5" y="6.500" width="45" height="35" rx="5" fill="url(#swg)"/><rect x=".5" y="36" width="45" height="5.500" rx="3" fill="#d5451a"/><text x="23" y="34.500" font-size="29" font-weight="bold" text-anchor="middle" fill="#fff" font-family="Liberation Sans, sans-serif">A</text><rect x="9" y="27" width="28" height="3.600" rx="1.800" fill="#fff"/></svg>
<!-- help -->
<svg style="left:13px;top:489px" width="46" height="46" viewBox="0 0 46 46"><defs><linearGradient id="hpg" x1="0" y1="0" x2="0" y2="1"><stop offset="0" stop-color="#3b9be6"/><stop offset="1" stop-color="#1f78c8"/></linearGradient></defs><circle cx="23" cy="23" r="22.500" fill="url(#hpg)"/><text x="23.500" y="35" font-size="34" text-anchor="middle" fill="#fff" font-family="DejaVu Sans, Liberation Sans, sans-serif">?</text></svg>
<!-- magnifier -->
<svg style="left:13px;top:561px" width="46" height="38" viewBox="0 0 46 38"><rect x=".5" y=".5" width="45" height="37" rx="5" fill="#dddcd2"/><rect x=".5" y="29" width="45" height="8.500" rx="4" fill="#b9b7a8"/><circle cx="36" cy="10" r="4" fill="#f6f6f2"/><circle cx="19.500" cy="16" r="11" fill="#ecebe6" fill-opacity=".75" stroke="#2d2d2d" stroke-width="2.200"/><path d="M28 24l8 7" stroke="#2d2d2d" stroke-width="3.500" stroke-linecap="round"/></svg>
<!-- red S -->
<svg style="left:14px;top:628px" width="44" height="40" viewBox="0 0 44 40"><defs><linearGradient id="rsg" x1="0" y1="0" x2="1" y2="1"><stop offset="0" stop-color="#f23a3a"/><stop offset="1" stop-color="#b50f14"/></linearGradient></defs><path d="M3 15C6 4 22-1 34 4c5 2 8 5 8 8-6-4-15-4-20-1s-3 6 3 7c9 1 17 3 16 10S25 41 14 37C8 35 3 31 1 26c7 4 16 4 20 2s2-5-4-6C9 21 2 20 3 15z" fill="url(#rsg)"/><path d="M21 8c6-3 14-3 20 2-6-1-12 0-16 3z" fill="#d8d8dc"/><path d="M2 26c0-4 3-7 8-8-3 3-2 6 2 8-4 2-8 2-10 0z" fill="#d8d8dc"/></svg>
<!-- seamly -->
<svg style="left:15px;top:693px" width="42" height="43" viewBox="0 0 42 43"><rect x=".5" y=".5" width="41" height="42" fill="#161d3f" stroke="#8d93a8" stroke-width=".8" stroke-dasharray="1.200 1.200"/><path d="M4 15C4 3 38 3 38 15v17h-3v-6h-2.500v10h-3v-10H27v6h-3v-6h-2.500v10h-3v-10H16v6h-3v-6h-2.500v10h-3v-10H4z" fill="#d9a63a"/><path d="M8 14c0-8 26-8 26-1s-17 7-17 1 9-4 10-1" fill="none" stroke="#161d3f" stroke-width="2.200"/></svg>
<!-- grid -->
<svg style="left:20px;top:1001px" width="32" height="32" viewBox="0 0 32 32"><g fill="#fbeff3"><rect x="1" y="1" width="6" height="6" rx="1.200"/><rect x="13" y="1" width="6" height="6" rx="1.200"/><rect x="25" y="1" width="6" height="6" rx="1.200"/><rect x="1" y="13" width="6" height="6" rx="1.200"/><rect x="13" y="13" width="6" height="6" rx="1.200"/><rect x="25" y="13" width="6" height="6" rx="1.200"/><rect x="1" y="25" width="6" height="6" rx="1.200"/><rect x="13" y="25" width="6" height="6" rx="1.200"/><rect x="25" y="25" width="6" height="6" rx="1.200"/></g></svg>

</div>
</body>
</html>
